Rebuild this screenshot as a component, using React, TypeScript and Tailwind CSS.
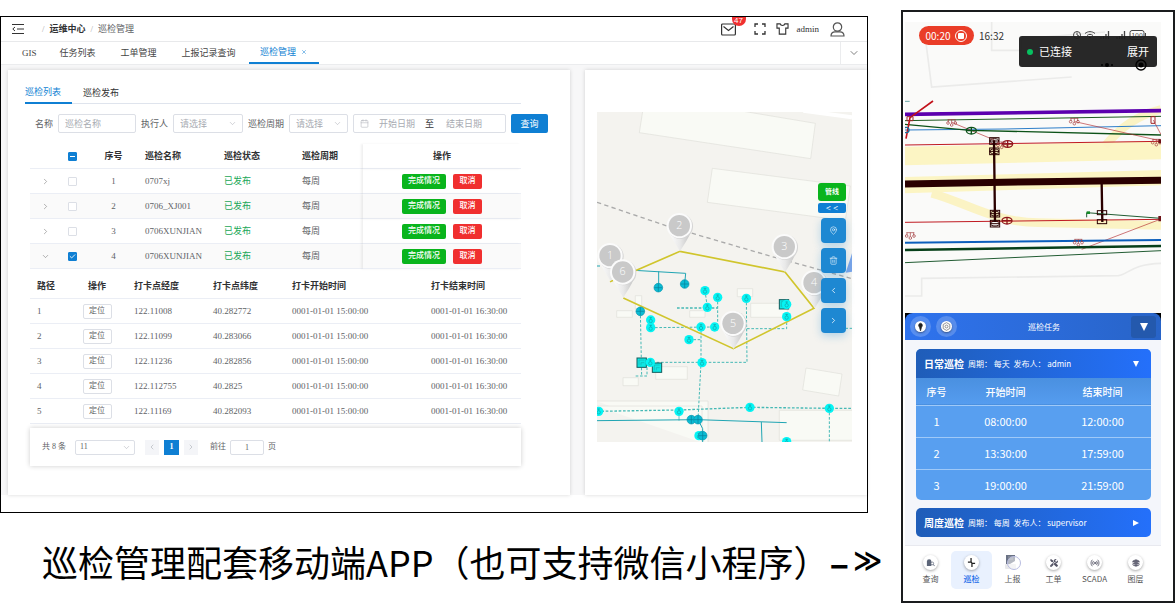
import type { ReactNode } from 'react'
import {
  Calendar,
  Check,
  ChevronDown,
  ChevronLeft,
  ChevronRight,
  Layers,
  MapPin,
  Radio,
  Trash2,
  X,
} from 'lucide-react'
import { FaTools } from 'react-icons/fa'

const navTabs = ['GIS', '任务列表', '工单管理', '上报记录查询']

const plans = [
  { id: 1, name: '0707xj', open: false },
  { id: 2, name: '0706_XJ001', open: false },
  { id: 3, name: '0706XUNJIAN', open: false },
  { id: 4, name: '0706XUNJIAN', open: true },
]

const points = [
  { id: 1, lng: '122.11008', lat: '40.282772' },
  { id: 2, lng: '122.11099', lat: '40.283066' },
  { id: 3, lng: '122.11236', lat: '40.282856' },
  { id: 4, lng: '122.112755', lat: '40.2825' },
  { id: 5, lng: '122.11169', lat: '40.282093' },
]

const shifts = [
  ['1', '08:00:00', '12:00:00'],
  ['2', '13:30:00', '17:59:00'],
  ['3', '19:00:00', '21:59:00'],
]

function App() {
  return (
    <main className="min-h-screen w-full bg-white flex items-start">
      <div className="flex-1 min-w-0 pt-4">
        <Desktop />
        <p className="mt-6 pl-[42px] flex items-center text-[36px] leading-[48px] text-black whitespace-nowrap font-['Noto_Sans_CJK_SC',sans-serif]">
          巡检管理配套移动端APP（也可支持微信小程序）
          <b>–</b>
          <b className="ml-1 text-[28px] font-['DejaVu_Sans',sans-serif]">≫</b>
        </p>
      </div>
      <Phone />
    </main>
  )
}

function Desktop() {
  return (
    <section className="mr-[33px] border border-black bg-white pb-[17px] text-[9px] leading-[12px] text-[#606266] font-['Liberation_Serif','Noto_Sans_CJK_SC',serif]">
      <TopBar />
      <NavBar />
      <div className="bg-[#f7f7f8] pt-[5px] pl-[7px] flex gap-[15px]">
        <PlanPanel />
        <MapPanel />
      </div>
    </section>
  )
}

function TopBar() {
  return (
    <header className="h-[25px] pl-[11px] pr-[22px] flex items-center justify-between border-b border-[#e8e9eb]">
      <div className="flex items-center">
        <svg viewBox="0 0 12 10" className="w-3 h-[10px] mr-[18px]" fill="none" stroke="#333" strokeWidth="1">
          <path d="M0 .5h12M5 5h7M0 9.5h12M3 3 .8 5 3 7" />
        </svg>
        <nav className="flex gap-[5px]">
          <span className="text-[#aaa]">/</span>
          <a href="#" className="font-bold text-[#303133]">运维中心</a>
          <span className="text-[#aaa]">/</span>
          <span>巡检管理</span>
        </nav>
      </div>
      <div className="flex items-center text-[#333]">
        <button aria-label="消息" className="relative mr-[18px]">
          <svg viewBox="0 0 15 13" className="w-[15px] h-[13px]" fill="none" stroke="#333" strokeWidth="1.2">
            <rect x=".6" y="1" width="13.8" height="11" rx="1" />
            <path d="m2.5 3.5 5 4 5-4" />
          </svg>
          <span className="absolute left-[11px] top-[-6px] w-[14px] h-[9px] overflow-hidden rounded-b-full bg-[#f03030] text-[8px] leading-[7px] text-white text-center font-['Liberation_Sans',sans-serif]">47</span>
        </button>
        <svg viewBox="0 0 12 12" className="w-3 h-3 mr-[10px]" fill="none" stroke="#333" strokeWidth="1.3">
          <path d="M1 4V1h3M8 1h3v3M11 8v3H8M4 11H1V8" />
        </svg>
        <svg viewBox="0 0 14 13" className="w-[13px] h-3 mr-2" fill="none" stroke="#333" strokeWidth="1.2">
          <path d="M4.500 1H1v4.500h2.500V12h7V5.500H13V1H9.500C9 3.200 5 3.200 4.500 1Z" />
        </svg>
        <span className="mr-[11px]">admin</span>
        <svg viewBox="0 0 15 15" className="w-[15px] h-[15px]" fill="none" stroke="#555" strokeWidth="1.2">
          <circle cx="7.500" cy="5" r="4.200" />
          <path d="M1 14c0-3 2-4.200 4-4.200h5c2 0 4 1.200 4 4.200Z" />
        </svg>
      </div>
    </header>
  )
}

function NavBar() {
  return (
    <nav className="h-[23px] pl-[21px] flex items-stretch justify-between border-b border-[#ebecee]">
      <div className="flex gap-[25px]">
        {navTabs.map((tab) => (
          <a key={tab} href="#" className="flex items-center text-[#444] first:-mr-[2px]">
            {tab}
          </a>
        ))}
        <a href="#" className="-ml-3 w-[70px] flex items-center justify-center gap-[5px] text-[#0f7fd3] border-b-2 border-[#0f7fd3]">
          巡检管理 <X size={6} />
        </a>
      </div>
      <button aria-label="更多" className="w-[27px] flex items-center justify-center border-l border-[#ebecee] text-[#555]">
        <ChevronDown size={12} strokeWidth={1.5} />
      </button>
    </nav>
  )
}

function PlanPanel() {
  return (
    <section className="flex-1 min-w-0 bg-white shadow-[0_0_4px_rgba(0,0,0,0.16)] pt-3 pl-[17px] pb-[29px]">
      <div className="mr-[49px] h-[22px] flex gap-[11px] border-b border-[#dfe4ed]">
        <button className="w-[47px] -mb-px border-b-2 border-[#0f7fd3] text-left text-[#0f7fd3]">巡检列表</button>
        <button className="text-[#303133]">巡检发布</button>
      </div>
      <SearchForm />
      <div className="ml-[5px] mr-[49px]">
        <PlanTable />
        <PointTable />
        <Pager />
      </div>
    </section>
  )
}

function SearchForm() {
  return (
    <form className="mt-[10px] mb-[11px] pl-[10px] h-[19px] flex items-center gap-[5px] whitespace-nowrap">
      <label htmlFor="name">名称</label>
      <input id="name" placeholder="巡检名称" className="w-[78px] h-[19px] px-[6px] border border-[#dcdfe6] rounded-[2px] placeholder:text-[#a8abb2]" />
      <label htmlFor="owner">执行人</label>
      <Dropdown id="owner" text="请选择" className="w-[70px]" />
      <label htmlFor="cycle">巡检周期</label>
      <Dropdown id="cycle" text="请选择" className="w-[59px]" />
      <div className="w-[153px] h-[19px] px-[6px] flex items-center border border-[#dcdfe6] rounded-[2px]">
        <Calendar size={9} strokeWidth={1.5} className="text-[#b0b3ba]" />
        <input aria-label="开始日期" placeholder="开始日期" className="w-[56px] text-center placeholder:text-[#a8abb2]" />
        <span className="text-[#303133]">至</span>
        <input aria-label="结束日期" placeholder="结束日期" className="w-[60px] text-center placeholder:text-[#a8abb2]" />
      </div>
      <button type="button" className="w-[37px] h-[19px] rounded-[2px] bg-[#0f7fd3] text-white">查询</button>
    </form>
  )
}

function Dropdown({ id, text, className }: { id: string; text: string; className: string }) {
  return (
    <div className="relative flex">
      <select id={id} className={`h-[19px] pl-[6px] appearance-none border border-[#dcdfe6] rounded-[2px] bg-white text-[#a8abb2] ${className}`}>
        <option>{text}</option>
      </select>
      <ChevronDown size={9} strokeWidth={1.5} className="absolute right-[6px] top-[5px] text-[#b0b3ba] pointer-events-none" />
    </div>
  )
}

function Tick({ label, on, mixed }: { label: string; on?: boolean; mixed?: boolean }) {
  return (
    <span className="relative inline-flex align-middle">
      <input
        type="checkbox"
        aria-label={label}
        defaultChecked={on || mixed}
        className="w-[9px] h-[9px] appearance-none rounded-[1px] border border-[#dcdfe6] bg-white checked:bg-[#0f7fd3] checked:border-[#0f7fd3]"
      />
      {on && <Check size={7} strokeWidth={3} className="absolute left-px top-px text-white pointer-events-none" />}
      {mixed && <span className="absolute left-[2px] top-1 w-[5px] h-px bg-white pointer-events-none" />}
    </span>
  )
}

function PlanTable() {
  return (
    <table className="w-full table-fixed border-separate border-spacing-0 text-left">
      <colgroup>
        <col className="w-[30px]" />
        <col className="w-[25px]" />
        <col className="w-[57px]" />
        <col className="w-[79px]" />
        <col className="w-[78px]" />
        <col className="w-[64px]" />
        <col />
      </colgroup>
      <thead>
        <tr className="text-[#303133] [&>th]:h-[25px] [&>th]:border-b [&>th]:border-[#ebeef5]">
          <th></th>
          <th className="text-center"><Tick label="全选" mixed /></th>
          <th className="text-center">序号</th>
          <th className="pl-[3px]">巡检名称</th>
          <th className="pl-[3px]">巡检状态</th>
          <th className="pl-[3px]">巡检周期</th>
          <th className="text-center shadow-[-2px_0_2px_rgba(0,0,0,0.06)]">操作</th>
        </tr>
      </thead>
      <tbody>
        {plans.map((plan) => (
          <tr key={plan.id} className="even:bg-[#fafafa] [&>td]:h-[25px] [&>td]:border-b [&>td]:border-[#ebeef5]">
            <td>
              <button aria-label="展开" className="mx-auto block text-[#777]">
                {plan.open ? <ChevronDown size={9} strokeWidth={1.5} /> : <ChevronRight size={9} strokeWidth={1.5} />}
              </button>
            </td>
            <td className="text-center"><Tick label={plan.name} on={plan.open} /></td>
            <td className="text-center">{plan.id}</td>
            <td className="pl-[3px]">{plan.name}</td>
            <td className="pl-[3px] text-[#19a757]">已发布</td>
            <td className="pl-[3px]">每周</td>
            <td className="shadow-[-2px_0_2px_rgba(0,0,0,0.06)]">
              <div className="flex justify-center gap-[7px] text-[8px] font-medium text-white">
                <button className="w-11 h-[15px] rounded-[2px] bg-[#09b41c]">完成情况</button>
                <button className="w-[29px] h-[15px] rounded-[2px] bg-[#f02f2f]">取消</button>
              </div>
            </td>
          </tr>
        ))}
      </tbody>
    </table>
  )
}

function PointTable() {
  return (
    <table className="mt-[5px] w-full table-fixed border-separate border-spacing-0 text-left">
      <colgroup>
        <col className="w-[38px]" />
        <col className="w-[59px]" />
        <col className="w-[79px]" />
        <col className="w-[79px]" />
        <col className="w-[139px]" />
        <col />
      </colgroup>
      <thead>
        <tr className="text-[#303133] [&>th]:h-[25px] [&>th]:pl-[7px] [&>th]:border-b [&>th]:border-[#ebeef5]">
          <th>路径</th>
          <th><span className="block w-11 text-center">操作</span></th>
          <th>打卡点经度</th>
          <th>打卡点纬度</th>
          <th>打卡开始时间</th>
          <th>打卡结束时间</th>
        </tr>
      </thead>
      <tbody>
        {points.map((p) => (
          <tr key={p.id} className="[&>td]:h-[25px] [&>td]:pl-[7px] [&>td]:border-b [&>td]:border-[#ebeef5]">
            <td>{p.id}</td>
            <td>
              <span className="flex w-11 justify-center">
                <button className="w-[29px] h-[15px] border border-[#dcdfe6] rounded-[2px] text-[8px]">定位</button>
              </span>
            </td>
            <td>{p.lng}</td>
            <td>{p.lat}</td>
            <td>0001-01-01 15:00:00</td>
            <td>0001-01-01 16:30:00</td>
          </tr>
        ))}
      </tbody>
    </table>
  )
}

function Pager() {
  return (
    <div className="mt-1 h-[38px] pl-3 flex items-center bg-white shadow-[0_0_5px_rgba(0,0,0,0.2)] text-[8px]">
      <span>共 8 条</span>
      <div className="relative ml-[9px] flex">
        <select aria-label="每页条数" className="w-[60px] h-[15px] pl-1 appearance-none border border-[#dcdfe6] rounded-[2px] bg-white">
          <option>11</option>
        </select>
        <ChevronDown size={9} strokeWidth={1.5} className="absolute right-1 top-[3px] text-[#b0b3ba] pointer-events-none" />
      </div>
      <div className="ml-[10px] flex gap-[5px]">
        <button aria-label="上一页" className="w-[14px] h-[15px] flex items-center justify-center bg-[#f4f5f8] text-[#b0b3ba]"><ChevronLeft size={8} /></button>
        <button className="w-[15px] h-[15px] bg-[#0f7fd3] font-bold text-white">1</button>
        <button aria-label="下一页" className="w-[14px] h-[15px] flex items-center justify-center bg-[#f4f5f8] text-[#b0b3ba]"><ChevronRight size={8} /></button>
      </div>
      <label htmlFor="page" className="ml-3">前往</label>
      <input id="page" defaultValue="1" className="mx-[4px] w-[34px] h-[15px] border border-[#dcdfe6] rounded-[2px] text-center" />
      <span>页</span>
    </div>
  )
}

const pins = [
  { n: 1, x: 39, y: 431 },
  { n: 2, x: 247, y: 341 },
  { n: 3, x: 562, y: 404 },
  { n: 4, x: 651, y: 512 },
  { n: 6, x: 77, y: 480 },
  { n: 5, x: 408, y: 634 },
]

const wells = [
  [324, 536], [362, 556], [331, 586], [448, 559], [161, 624], [161, 647], [312, 645], [353, 645],
  [276, 683], [315, 752], [160, 751], [569, 614], [569, 577], [246, 898], [459, 886], [697, 889],
  [5, 898], [569, 989], [306, 971],
]

const valves = [[184, 527], [263, 516], [130, 598], [283, 923], [303, 923], [317, 971]]

const stations = [[561, 577], [134, 752], [180, 767]]

function MapPanel() {
  return (
    <section className="w-[282px] bg-white shadow-[0_0_4px_rgba(0,0,0,0.16)] pt-[42px] pl-3 pr-[15px]">
      <div className="relative">
        <svg viewBox="0 0 765 990" className="block w-full">
          <defs>
            <linearGradient id="pin" x1="0" x2="1">
              <stop offset="0" stopColor="#fff" />
              <stop offset=".5" stopColor="#e9e9e9" />
              <stop offset="1" stopColor="#bdbdbd" />
            </linearGradient>
          </defs>
          <rect width="765" height="990" fill="#f4f3ef" />
          <path d="M619-4 765 16" stroke="#fff" strokeWidth="12" />
          <g fill="#f9faf5" stroke="#dfdfda" strokeWidth="2">
            <path d="M137-2 127 62l514 78 14-106L440-2ZM346 169l-15 102 414 55 15-104Z" />
            <path d="M59 596h47v20H59ZM115 551h19v40h-19ZM278 596h46v20h-46ZM421 530h46v24h-46ZM461 574h110v42H461ZM176 764h95v38h-95ZM78 797h46v24H78ZM627 768l108 18-10 66-108-18Z" />
            <path d="M-3 867h336v125M-3 882h318v110M547 895h220v90H547Z" />
          </g>
          <path d="m765 424-19 58 19-3Z" fill="#7aa4e8" />
          <path d="m0 271 210 71 316 92 239 66" fill="none" stroke="#aaa" strokeWidth="4" strokeDasharray="13 10" />
          <g fill="none" stroke="#20a5b3" strokeWidth="3">
            <path d="M0 462h9M95 474l171 10-3 32M185 478v54M0 926l303-3 266 9M493 930l2 60M303 923l14 27v40" />
            <path d="M246 898v28" strokeWidth="2" />
            <g stroke="#45b9b5" strokeDasharray="8 5">
              <path d="M362 556v89M324 536l7 50M161 647l192-2M130 598l4 194M116 792h34v-30M448 559l2 192H160M450 650h119v-36M276 683h36M312 645v107l-9 171M697 889v101M745 649h20" />
              <path d="M240 588h122M0 898l246-4 213-8 238 3h68" strokeWidth="4" />
            </g>
          </g>
          <path d="m39 509 210-91 315 62 87 109-242 121L79 558" fill="none" stroke="#d0c52c" strokeWidth="5" />
          {stations.map(([x, y]) => (
            <g key={x} transform={`translate(${x} ${y})`}>
              <rect x="-14" y="-14" width="28" height="28" fill="#0fe8e4" stroke="#135c5c" strokeWidth="3" />
              <path d="M-8 8V-8H8M-2 8V0H8" fill="none" stroke="#12b4b4" strokeWidth="2" />
            </g>
          ))}
          {wells.map(([x, y]) => (
            <g key={`${x}-${y}`} transform={`translate(${x} ${y})`}>
              <circle r="14" fill="#05f4f4" />
              <circle cy="3" r="5" fill="none" stroke="#14a3a8" strokeWidth="2" />
              <path d="M0-8v6M-4-7h8" stroke="#14a3a8" strokeWidth="2" />
            </g>
          ))}
          {valves.map(([x, y]) => (
            <g key={`${x}-${y}`} transform={`translate(${x} ${y})`}>
              <circle r="13" fill="#0bbcd4" stroke="#0996ad" strokeWidth="2" />
              <path d="M-12 0h24M0-12v24" stroke="#07809a" strokeWidth="2" />
            </g>
          ))}
          {pins.map((p) => (
            <g key={p.n} transform={`translate(${p.x} ${p.y})`}>
              <path d="M-35 12C-26 34-10 56 2 77 14 56 32 34 39 4Z" fill="url(#pin)" />
              <circle cx="3" cy="2" r="38" fill="#d4d4d4" />
              <circle r="38" fill="#fbfbfb" />
              <circle r="32" fill="#c9c9c9" />
              <text y="10" textAnchor="middle" className="text-[32px] font-light font-['Open_Sans',sans-serif]" fill="#fff">{p.n}</text>
            </g>
          ))}
        </svg>
        <div className="absolute right-[6px] top-[71px] flex flex-col items-end gap-[5px] text-white">
          <div className="flex flex-col gap-[2px]">
            <button className="w-7 h-[18px] rounded-[3px] bg-[#09b41c] text-[7px] font-bold">管线</button>
            <button className="w-7 h-[10px] rounded-[2px] bg-[#0f7fd3] text-[9px] leading-[8px] font-bold">&lt; &lt;</button>
          </div>
          <ToolButton label="定位"><MapPin size={9} strokeWidth={1.5} /></ToolButton>
          <ToolButton label="清除"><Trash2 size={9} strokeWidth={1.5} /></ToolButton>
          <ToolButton label="向左"><ChevronLeft size={9} /></ToolButton>
          <ToolButton label="向右"><ChevronRight size={9} /></ToolButton>
        </div>
      </div>
    </section>
  )
}

function ToolButton({ label, children }: { label: string; children: ReactNode }) {
  return (
    <button aria-label={label} className="w-[25px] h-[25px] flex items-center justify-center rounded-[4px] bg-[#1e88d2] shadow-[0_3px_8px_rgba(30,136,210,0.3)]">
      {children}
    </button>
  )
}

function Phone() {
  return (
    <section className="mt-[10px] w-[274px] shrink-0 border-2 border-[#1a1c1e] pt-[10px] pl-[2px] pr-3 text-white font-['Noto_Sans_CJK_SC',sans-serif]">
      <div className="relative">
        <PipeMap />
        <div className="absolute left-[14px] top-1 w-[55px] h-[19px] flex items-center justify-center gap-[5px] rounded-full bg-[#ea3d28] text-[10px]">
          00:20
          <span className="w-3 h-3 flex items-center justify-center rounded-full border border-white">
            <span className="w-[6px] h-[6px] rounded-[1px] bg-white" />
          </span>
        </div>
        <span className="absolute left-[74px] top-1 text-[10px] leading-[19px] text-[#333]">16:32</span>
        <StatusIcons />
        <div className="absolute left-[114px] right-1 top-[14px] h-[31px] px-2 flex items-center rounded-[3px] bg-[#1c1c1c]/95 text-[11px]">
          <span className="w-[6px] h-[6px] mr-[6px] rounded-full bg-[#07c160]" />
          已连接
          <button className="ml-auto">展开</button>
        </div>
        <svg viewBox="0 0 48 14" className="absolute right-[14px] top-9 w-12 h-[14px]" fill="#000">
          <circle cx="3" cy="7" r="1" />
          <circle cx="8" cy="7" r="2" />
          <circle cx="13" cy="7" r="1" />
          <circle cx="42" cy="7" r="5" fill="none" stroke="#000" strokeWidth="1.3" />
          <circle cx="42" cy="7" r="2.500" />
        </svg>
      </div>
      <div className="bg-black">
        <header className="h-[27px] px-[5px] flex items-center gap-[5px] rounded-t-[8px] bg-linear-to-r from-[#2f73ee] to-[#2864c8]">
          <RoundButton label="定位">
            <path d="M5 2a2 2 0 0 0-1 3.500L5 9l1-3.500A2 2 0 0 0 5 2Z" fill="#222" stroke="#222" strokeWidth=".6" />
          </RoundButton>
          <RoundButton label="设置">
            <path d="m5 1.500 3 1.700v3.600L5 8.500 2 6.800V3.200Z" fill="none" stroke="#777" strokeWidth=".7" />
            <circle cx="5" cy="5" r="1.300" fill="none" stroke="#777" strokeWidth=".7" />
          </RoundButton>
          <h2 className="flex-1 pl-[18px] text-center text-[8px]">巡检任务</h2>
          <button aria-label="收起" className="ml-[18px] w-[25px] h-[22px] flex items-center justify-center rounded-[3px] bg-[#2459ad]">
            <svg viewBox="0 0 8 8" className="w-2 h-2" fill="#fff"><path d="M0 0h8L4 8Z" /></svg>
          </button>
        </header>
      </div>
      <div className="bg-[#f4f6fb] border-b border-[#e8e9ef] px-[10px] pt-[9px] pb-2 pl-[11px]">
        <div className="rounded-[5px] overflow-hidden bg-[#589ff0]">
          <TaskHeader title="日常巡检" info="周期： 每天  发布人： admin" open />
          <table className="w-full table-fixed text-center text-[11px]">
            <colgroup>
              <col className="w-[41px]" />
              <col className="w-[97px]" />
              <col />
            </colgroup>
            <thead>
              <tr className="h-[27px] text-[10px] bg-linear-to-b from-[#4a90e0] to-[#559cef] border-b border-[#9fc9f8]">
                <th className="font-medium">序号</th>
                <th className="font-medium">开始时间</th>
                <th className="font-medium">结束时间</th>
              </tr>
            </thead>
            <tbody>
              {shifts.map((row) => (
                <tr key={row[0]} className="h-8 border-b border-[#9fc9f8] last:border-0 last:h-[31px]">
                  {row.map((cell) => <td key={cell}>{cell}</td>)}
                </tr>
              ))}
            </tbody>
          </table>
        </div>
        <div className="mt-2 rounded-[5px] overflow-hidden">
          <TaskHeader title="周度巡检" info="周期： 每周  发布人： supervisor" />
        </div>
      </div>
      <TabBar />
    </section>
  )
}

function StatusIcons() {
  return (
    <svg viewBox="0 0 76 12" className="absolute left-[166px] top-[7px] w-[76px] h-3" fill="none" stroke="#444" strokeWidth="1">
      <circle cx="6" cy="6" r="3.500" />
      <path d="M6 3.500V6l2 1" />
      <path d="M14 4.500c3-2.500 7-2.500 10 0M16 6.500c2-1.500 4-1.500 6 0M18 8.500h2" />
      <path d="M30 10V8M32.500 10V7M35 10V5M37.500 10V2M46 10V8M48.500 10V7M51 10V5M53.500 10V2" strokeWidth="1.300" />
      <rect x="59" y="1.500" width="14" height="9" rx="2" />
      <path d="M74.500 4v4" />
      <text x="66" y="8.500" textAnchor="middle" fontSize="7" fill="#444" stroke="none">100</text>
    </svg>
  )
}

function PipeMap() {
  return (
    <svg viewBox="0 0 768 873" preserveAspectRatio="none" className="block w-full h-[291px]" fill="none">
      <rect width="768" height="873" fill="#fafaf9" />
      <path d="M60 40 80 195l420-30M0 822h50v-53l590-8c30-4 40-35 128-37M260 0v85h90V50l250-20" stroke="#ebebea" strokeWidth="5" />
      <path d="M0 374l768-17v55L0 430ZM0 465l768-21v46L0 514Z" fill="#fcf5c4" />
      <path d="M80 514c100 26 180 86 320 88l368 8M600 372c50-60 100-92 168-110" stroke="#fbf3c4" strokeWidth="26" />
      <path d="M0 277 768 266" stroke="#5c00ae" strokeWidth="11" />
      <path d="M0 296 768 283" stroke="#1e5a22" strokeWidth="3" />
      <path d="M0 324 300 321 768 311" stroke="#2d7ec9" strokeWidth="3" />
      <path d="m0 307 195 18 573 14" stroke="#0c5218" strokeWidth="4" />
      <path d="M0 369 768 358M0 601l768-9" stroke="#c01a22" strokeWidth="3" />
      <path d="m140 301 128 53M510 299l250 56M530 682l230-88M745 294l23 44" stroke="#b53237" strokeWidth="2" />
      <path d="m84 237-69 50-12 63" stroke="#c2121b" strokeWidth="5" />
      <path d="M0 486 400 479 768 475" stroke="#2a0000" strokeWidth="21" />
      <path d="m267 355 3 245M590 484l2 116" stroke="#2a0000" strokeWidth="7" />
      <path d="M0 662 768 654" stroke="#0b5ebb" strokeWidth="6" />
      <path d="M0 684 768 672" stroke="#07401a" strokeWidth="7" />
      <path d="M0 722 768 686M545 586v-14l223 17" stroke="#225c33" strokeWidth="3" />
      <path d="M545 568h10v8h-10Z" fill="#158a28" />
      <path d="M0 238h14" stroke="#6aa7a7" strokeWidth="3" />
      {[[268, 357], [268, 388], [270, 575], [270, 605]].map(([x, y]) => (
        <g key={y} transform={`translate(${x} ${y})`} stroke="#2a0000" strokeWidth="3">
          <rect x="-14" y="-10" width="28" height="20" />
          <ellipse rx="13" ry="7" />
          <path d="M-14 0h28" />
        </g>
      ))}
      {[[591, 572], [591, 599]].map(([x, y]) => (
        <rect key={y} x={x - 14} y={y - 6} width="28" height="12" stroke="#2a0000" strokeWidth="3" />
      ))}
      {[[308, 366], [306, 596]].map(([x, y]) => (
        <g key={y} transform={`translate(${x} ${y})`} stroke="#8f151b" strokeWidth="4">
          <ellipse rx="15" ry="10" />
          <path d="M-15 0h30M0-10v20" />
        </g>
      ))}
      <g transform="translate(199 326)" stroke="#0c5218" strokeWidth="4">
        <ellipse rx="15" ry="10" />
        <path d="M-15 0h30M0-10v20" />
      </g>
      {[[140, 301], [508, 297], [754, 360], [16, 640], [520, 660], [290, 368]].map(([x, y]) => (
        <g key={x} transform={`translate(${x} ${y})`} stroke="#a0363a" strokeWidth="2">
          <path d="M-12-8h24M0-8V4M-10-8v8M10-8v8" />
          <circle cx="-11" cy="2" r="4" />
          <circle cx="11" cy="2" r="4" />
          <circle cy="8" r="4" />
        </g>
      ))}
      <path d="M738 284h12v20h-12ZM6 284h18v12H6Z" stroke="#a0262b" strokeWidth="3" />
      <path d="M760 352h8v12h-8ZM760 582h8v16h-8Z" fill="#6e1218" />
      <circle cx="4" cy="324" r="8" stroke="#1f6d97" strokeWidth="4" />
    </svg>
  )
}

function RoundButton({ label, children }: { label: string; children: ReactNode }) {
  return (
    <button aria-label={label} className="w-[21px] h-[21px] flex items-center justify-center rounded-full bg-white/20">
      <svg viewBox="0 0 10 10" className="w-[11px] h-[11px] rounded-full bg-white shadow-[0_1px_2px_rgba(0,0,0,0.4)]">{children}</svg>
    </button>
  )
}

function TaskHeader({ title, info, open }: { title: string; info: string; open?: boolean }) {
  return (
    <div className="h-[29px] pl-2 pr-3 flex items-center bg-linear-to-r from-[#1f5db8] to-[#2470fb] whitespace-pre">
      <b className="text-[10px]">{title}</b>
      <span className="ml-1 text-[8px]">{info}</span>
      <svg viewBox="0 0 6 6" className="ml-auto w-[6px] h-[6px]" fill="#fff">
        <path d={open ? 'M0 0h6L3 6Z' : 'M0 0v6l6-3Z'} />
      </svg>
    </div>
  )
}

const phoneTabs = [
  {
    label: '查询',
    icon: (
      <svg viewBox="0 0 10 10" className="w-[9px] h-[9px]" fill="#5c6578">
        <path d="M1 9V4a2.500 2.500 0 0 1 5 0v5Z" />
        <circle cx="7" cy="6" r="1.500" fill="#fff" stroke="#5c6578" strokeWidth=".8" />
        <path d="m8 7 1.500 2" stroke="#5c6578" />
      </svg>
    ),
  },
  {
    label: '巡检',
    icon: (
      <svg viewBox="0 0 10 10" className="w-[9px] h-[9px]" fill="none" stroke="#222" strokeWidth="1.400">
        <path d="M4.500 0v4c0 1 1 1 1 2v4M1 4.500h3.500M5.500 6H9" />
      </svg>
    ),
  },
  { label: '上报', icon: null },
  { label: '工单', icon: <FaTools size={8} /> },
  { label: 'SCADA', icon: <Radio size={10} /> },
  { label: '图层', icon: <Layers size={8} fill="#667" /> },
]

function TabBar() {
  return (
    <nav className="h-[55px] px-[5px] pt-[5px] grid grid-cols-6 text-[8px] text-[#555]">
      {phoneTabs.map((tab) => (
        <a
          key={tab.label}
          href="#"
          className={`h-[38px] pt-1 flex flex-col items-center gap-[3px] rounded-[5px] leading-[12px] ${tab.label === '巡检' ? 'bg-[#e9f1fe] text-[#1769e8] font-medium' : ''}`}
        >
          {tab.icon ? (
            <span className="w-[15px] h-[15px] flex items-center justify-center rounded-full bg-white text-[#556] shadow-[0_1px_3px_rgba(0,0,0,0.35)]">
              {tab.icon}
            </span>
          ) : (
            <svg viewBox="0 0 18 15" className="w-[18px] h-[15px]">
              <path d="M2 0h9v6L6 9H2Z" fill="#6a7285" />
              <path d="M4 2h5M4 4h5" stroke="#bbb" strokeWidth=".6" />
              <rect x="1" y="9" width="11" height="5" rx="1" fill="#e8e8ea" />
              <circle cx="10" cy="8" r="6.500" fill="#fff" fillOpacity=".5" stroke="#b8bce0" />
            </svg>
          )}
          {tab.label}
        </a>
      ))}
    </nav>
  )
}

export default App
